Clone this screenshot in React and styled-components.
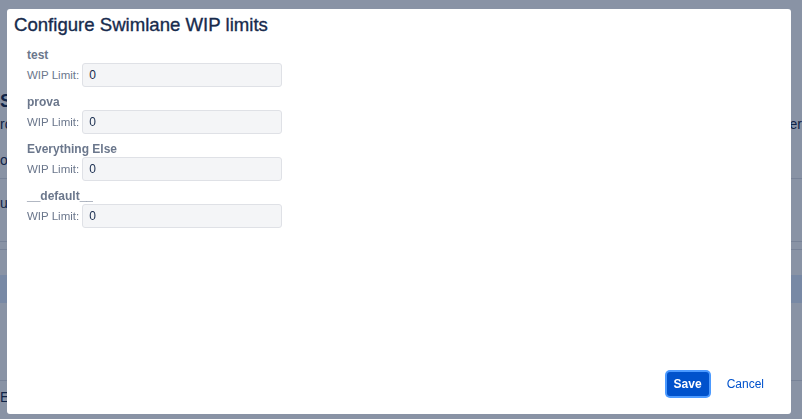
import React from "react";
import styled, { createGlobalStyle } from "styled-components";

const GlobalStyle = createGlobalStyle`
  html, body {
    margin: 0;
    padding: 0;
    background: #fff;
    font-family: "Liberation Sans", Arial, sans-serif;
    overflow: hidden;
  }
`;

const lanes = ["test", "prova", "Everything Else", "__default__"];

/* page behind the dialog, only its edges show */
const Page = styled.div`
  height: 419px;
  display: flex;
  flex-direction: column;
  color: #172b4d;
  font-size: 14px;
`;

const PageTop = styled.div`
  height: 90px;
`;

const PageHeading = styled.h2`
  margin: 0;
  font-size: 18px;
  font-weight: 700;
  line-height: 22px;
`;

const PageLine = styled.div`
  display: flex;
  justify-content: space-between;
  line-height: 20px;
  margin-top: ${(p) => p.$top || 0}px;
`;

const Rule = styled.div`
  height: 1px;
  background: #dfe1e6;
  margin-top: ${(p) => p.$top || 0}px;
`;

const Band = styled.div`
  height: ${(p) => p.$h}px;
  background: ${(p) => p.$bg};
  margin-top: ${(p) => p.$top || 0}px;
`;

const Blanket = styled.div`
  position: fixed;
  inset: 0;
  background: rgba(9, 30, 66, 0.48);
`;

const Dialog = styled.div`
  position: fixed;
  top: 9px;
  left: 7px;
  width: 784px;
  height: 405px;
  background: #fff;
  border-radius: 3px;
  display: flex;
  flex-direction: column;
  box-sizing: border-box;
`;

const Title = styled.h1`
  margin: 4px 0 0 7px;
  font-size: 18.6px;
  font-weight: 400;
  line-height: 24px;
  color: #172b4d;
  -webkit-text-stroke: 0.35px #172b4d;
`;

const Form = styled.div`
  flex: 1;
  padding: 11px 0 0 20px;
  display: flex;
  flex-direction: column;
  gap: 8px;
`;

const Group = styled.div`
  display: flex;
  flex-direction: column;
`;

const LaneName = styled.div`
  font-size: 12px;
  font-weight: 700;
  line-height: 15px;
  color: #6b778c;
`;

const Row = styled.label`
  display: flex;
  align-items: center;
  gap: 3px;
  font-size: 11.5px;
  color: #6b778c;
`;

const Input = styled.input`
  width: 200px;
  height: 24px;
  box-sizing: border-box;
  border: 1px solid #dfe1e6;
  border-radius: 3px;
  background: #f4f5f7;
  padding: 0 6px;
  font-family: inherit;
  font-size: 12px;
  color: #172b4d;
  outline: none;
`;

const Footer = styled.div`
  display: flex;
  justify-content: flex-end;
  align-items: center;
  gap: 8px;
  padding: 0 17px 18px 0;
`;

const Button = styled.button`
  height: 24px;
  border: none;
  border-radius: 3px;
  font-family: inherit;
  font-size: 12px;
  cursor: pointer;
  padding: ${(p) => (p.$primary ? "0 7px" : "0 10px")};
  background: ${(p) => (p.$primary ? "#0052cc" : "transparent")};
  color: ${(p) => (p.$primary ? "#fff" : "#0052cc")};
  font-weight: ${(p) => (p.$primary ? 700 : 400)};
  box-shadow: ${(p) => (p.$primary ? "0 0 0 2px #4c9aff" : "none")};
`;

export default function App() {
  return (
    <>
      <GlobalStyle />
      <Page>
        <PageTop />
        <PageHeading>Sw</PageHeading>
        <PageLine $top={2}>
          <span>ro</span>
          <span>ner</span>
        </PageLine>
        <PageLine $top={16}>
          <span>or</span>
        </PageLine>
        <Rule $top={8} />
        <PageLine $top={14}>
          <span>us</span>
        </PageLine>
        <Rule $top={28} />
        <Rule $top={7} />
        <Band $h={28} $bg="#deebff" $top={25} />
        <Rule $top={77} />
        <PageLine $top={6}>
          <span>E</span>
        </PageLine>
      </Page>
      <Blanket />
      <Dialog role="dialog">
        <Title>Configure Swimlane WIP limits</Title>
        <Form>
          {lanes.map((name) => (
            <Group key={name}>
              <LaneName>{name}</LaneName>
              <Row>
                WIP Limit:
                <Input defaultValue="0" />
              </Row>
            </Group>
          ))}
        </Form>
        <Footer>
          <Button $primary>Save</Button>
          <Button>Cancel</Button>
        </Footer>
      </Dialog>
    </>
  );
}
